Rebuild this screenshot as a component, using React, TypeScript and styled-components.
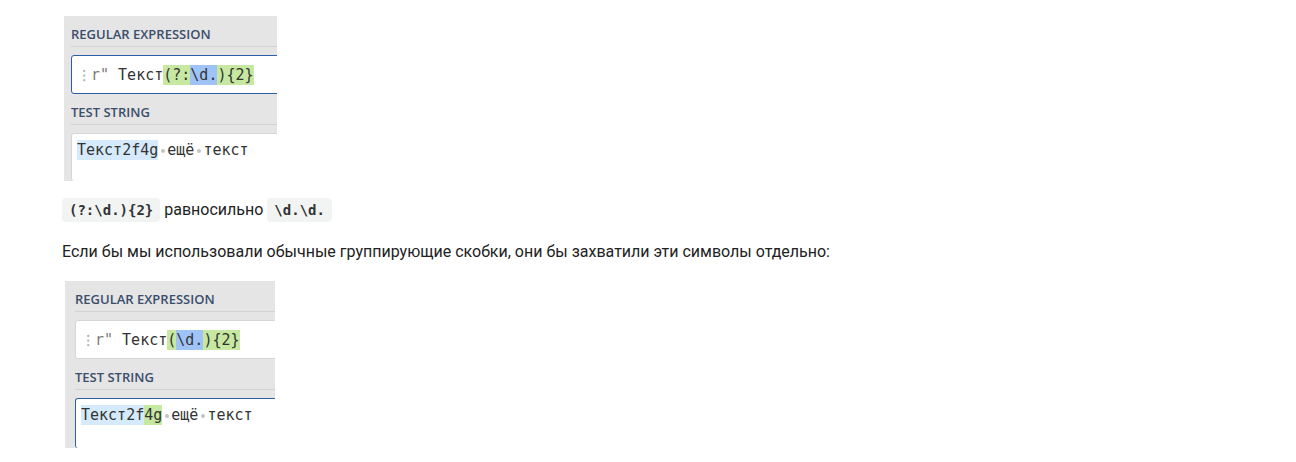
import React from 'react'
import styled, { createGlobalStyle } from 'styled-components'

const GlobalStyle = createGlobalStyle`
  body {
    margin: 0;
    background: #ffffff;
    font-family: Roboto, 'Liberation Sans', sans-serif;
  }
`

const Page = styled.div`
  display: flex;
  flex-direction: column;
  align-items: flex-start;
  padding: 16px 0 0 62px;
`

// cropped regex101 screenshot
const Shot = styled.div<{ $pad: number; $w: number; $h: number; $shift: number; $top?: number }>`
  box-sizing: border-box;
  width: ${({ $w }) => $w}px;
  height: ${({ $h }) => $h}px;
  margin-left: ${({ $shift }) => $shift}px;
  margin-top: ${({ $top }) => $top || 0}px;
  padding-left: ${({ $pad }) => $pad}px;
  background: #e5e5e5;
  overflow: hidden;
  display: flex;
  flex-direction: column;
`

const Header = styled.div`
  height: 31px;
  box-sizing: border-box;
  display: flex;
  align-items: flex-end;
  padding-bottom: 3px;
  border-bottom: 1px solid #d2d2d2;
  font-family: 'Open Sans', sans-serif;
  font-weight: 600;
  font-size: 13px;
  color: #3b4e6b;
`

const Editor = styled.div<{ $active: boolean; $h?: number }>`
  box-sizing: border-box;
  width: 400px;
  margin-top: 8px;
  height: ${({ $h }) => ($h ? `${$h}px` : 'auto')};
  background: #ffffff;
  border: 1px solid ${({ $active }) => ($active ? '#2f5ea8' : '#d6d6d6')};
  border-radius: 3px;
  font-family: 'DejaVu Sans Mono', 'Liberation Mono', monospace;
  font-size: 15px;
  color: #333333;
  display: flex;
  align-items: center;
  padding-left: 10px;
  white-space: pre;
`

const TestArea = styled(Editor)`
  flex: 1;
  align-items: flex-start;
  padding-left: 5px;
  padding-top: 6px;
  line-height: 20px;
  border-bottom: none;
`

const Grip = styled.span`
  color: #b0b0b0;
  font-size: 16px;
  margin-right: 5px;
`

const Flag = styled.span`
  color: #7a7a7a;
`

const Hl = styled.span<{ $c: string }>`
  background: ${({ $c }) => $c};
  line-height: 20px;
  display: inline-block;
`

const Space = styled.span`
  display: inline-block;
  width: 1ch;
  position: relative;
  &::after {
    content: '';
    position: absolute;
    left: 50%;
    top: 50%;
    width: 4px;
    height: 4px;
    margin: -1px 0 0 -2px;
    border-radius: 50%;
    background: #c4c4c4;
  }
  &::before {
    content: ' ';
  }
`

const Line = styled.p`
  margin: 17px 0 0 0;
  font-size: 16px;
  line-height: 24px;
  color: #222222;
`

const Para = styled(Line)`
  margin-top: 18px;
`

const Code = styled.code`
  display: inline-block;
  height: 24px;
  line-height: 24px;
  padding: 0 7px;
  background: #f2f3f3;
  border-radius: 4px;
  font-family: 'DejaVu Sans Mono', 'Liberation Mono', monospace;
  font-size: 14px;
  font-weight: bold;
  color: #333333;
  vertical-align: top;
`

const GREEN = '#c6e8a0'
const BLUE = '#9fc3f7'
const MATCH = '#d5eafc'

export default function App() {
  return (
    <>
      <GlobalStyle />
      <Page>
        <Shot $pad={7} $w={213} $h={165} $shift={2}>
          <Header>REGULAR EXPRESSION</Header>
          <Editor $active $h={39}>
            <Grip>⁝</Grip>
            <Flag>r" </Flag>
            Текст<Hl $c={GREEN}>(?:</Hl><Hl $c={BLUE}>\d.</Hl><Hl $c={GREEN}>){'{2}'}</Hl>
          </Editor>
          <Header>TEST STRING</Header>
          <TestArea $active={false}>
            <Hl $c={MATCH}>Текст2f4g</Hl>
            <Space />ещё<Space />текст
          </TestArea>
        </Shot>

        <Line>
          <Code>(?:\d.){'{2}'}</Code> равносильно <Code>\d.\d.</Code>
        </Line>

        <Para>
          Если бы мы использовали обычные группирующие скобки, они бы захватили эти символы отдельно:
        </Para>

        <Shot $pad={10} $w={210} $h={167} $shift={3} $top={17}>
          <Header>REGULAR EXPRESSION</Header>
          <Editor $active={false} $h={39}>
            <Grip>⁝</Grip>
            <Flag>r" </Flag>
            Текст<Hl $c={GREEN}>(</Hl><Hl $c={BLUE}>\d.</Hl><Hl $c={GREEN}>){'{2}'}</Hl>
          </Editor>
          <Header>TEST STRING</Header>
          <TestArea $active>
            <Hl $c={MATCH}>Текст2f</Hl><Hl $c={GREEN}>4g</Hl>
            <Space />ещё<Space />текст
          </TestArea>
        </Shot>
      </Page>
    </>
  )
}
